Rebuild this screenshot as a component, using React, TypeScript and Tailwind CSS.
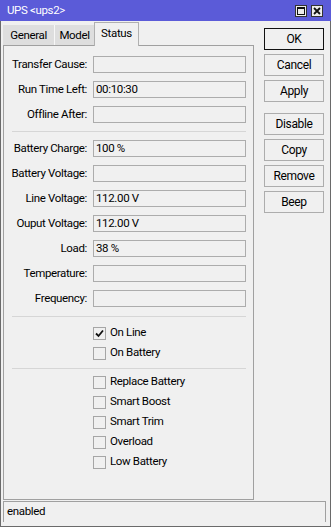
import React from "react";

const fields1: [string, string][] = [
  ["Transfer Cause:", ""],
  ["Run Time Left:", "00:10:30"],
  ["Offline After:", ""],
];
const fields2: [string, string][] = [
  ["Battery Charge:", "100 %"],
  ["Battery Voltage:", ""],
  ["Line Voltage:", "112.00 V"],
  ["Ouput Voltage:", "112.00 V"],
  ["Load:", "38 %"],
  ["Temperature:", ""],
  ["Frequency:", ""],
];
const checks1: [string, boolean][] = [
  ["On Line", true],
  ["On Battery", false],
];
const checks2: [string, boolean][] = [
  ["Replace Battery", false],
  ["Smart Boost", false],
  ["Smart Trim", false],
  ["Overload", false],
  ["Low Battery", false],
];
const buttons1 = ["OK", "Cancel", "Apply"];
const buttons2 = ["Disable", "Copy", "Remove", "Beep"];

function Field({ label, value }: { label: string; value: string }) {
  return (
    <div className="flex h-[25px] items-center">
      <div className="w-[83px] text-right whitespace-nowrap">{label}</div>
      <div className="ml-[6px] flex h-[17px] w-[153px] items-center border border-[#acacac] bg-[#f0f0f0] pl-[2px] whitespace-nowrap">
        {value}
      </div>
    </div>
  );
}

function Check({ label, checked }: { label: string; checked: boolean }) {
  return (
    <div className="flex h-[20px] items-center pl-[89px]">
      <div className="flex h-[13px] w-[13px] items-center justify-center border border-[#a6a6a6] bg-[#f0f0f0]">
        {checked && (
          <svg width="9" height="9" viewBox="0 0 9 9">
            <path d="M1 4.5 L3.5 7 L8 1.5" fill="none" stroke="#111" strokeWidth="1.8" />
          </svg>
        )}
      </div>
      <div className="ml-[4px] whitespace-nowrap">{label}</div>
    </div>
  );
}

function Sep({ cls }: { cls: string }) {
  return <div className={"ml-[8px] h-px w-[234px] bg-[#d6d6d6] " + cls} />;
}

function Btn({ label, def }: { label: string; def?: boolean }) {
  return (
    <div
      className={
        "flex h-[22px] w-[60px] items-center justify-center bg-[#f0f0f0] text-[12px] " +
        (def ? "border border-[#111]" : "border border-[#adadad]")
      }
    >
      {label}
    </div>
  );
}

export default function App() {
  return (
    <div className="flex h-[527px] w-[331px] flex-col overflow-hidden bg-[#f0f0f0] font-['Roboto',Arial,sans-serif] text-[11.5px] tracking-[-0.35px] text-black">
      <div className="flex h-[21px] shrink-0 items-center bg-[#5b5bd8] pl-[7px] pr-[8px] text-white">
        <div className="flex-1 whitespace-nowrap">UPS &lt;ups2&gt;</div>
        <div className="flex h-[12px] w-[12px] items-center justify-center border border-[#333] bg-[#ececec]">
          <div className="h-[8px] w-[8px] border border-t-2 border-[#111]" />
        </div>
        <div className="ml-[4px] flex h-[12px] w-[12px] items-center justify-center border border-[#333] bg-[#ececec]">
          <svg width="8" height="8" viewBox="0 0 8 8">
            <path d="M1 1 L7 7 M7 1 L1 7" stroke="#111" strokeWidth="1.8" />
          </svg>
        </div>
      </div>
      <div className="flex flex-1 flex-col border-x border-b border-[#6a6a6a]">
        <div className="flex h-[479px] shrink-0">
          <div className="ml-[2px] flex w-[251px] flex-col">
            <div className="flex h-[24px] shrink-0 items-end">
              <div className="flex h-[20px] w-[52px] items-center justify-center border-r border-[#f7f7f7] bg-[#dedede] pt-[2px]">
                General
              </div>
              <div className="flex h-[20px] w-[39px] items-center justify-center bg-[#dedede] pt-[2px]">Model</div>
              <div className="relative z-10 -mb-px flex h-[24px] w-[45px] items-center justify-center border-x border-t border-[#b0b0b0] bg-[#f0f0f0] pb-[2px]">
                Status
              </div>
            </div>
            <div className="flex flex-1 flex-col border border-[#a0a0a0] pt-[6px]">
              {fields1.map(([l, v]) => (
                <Field key={l} label={l} value={v} />
              ))}
              <Sep cls="mt-[4px] mb-[4px]" />
              {fields2.map(([l, v]) => (
                <Field key={l} label={l} value={v} />
              ))}
              <Sep cls="mt-[5px] mb-[6px]" />
              {checks1.map(([l, c]) => (
                <Check key={l} label={l} checked={c} />
              ))}
              <Sep cls="mt-[5px] mb-[3px]" />
              {checks2.map(([l, c]) => (
                <Check key={l} label={l} checked={c} />
              ))}
            </div>
          </div>
          <div className="ml-[10px] mt-[7px] flex flex-col">
            <div className="flex flex-col gap-[4px]">
              {buttons1.map((b) => (
                <Btn key={b} label={b} def={b === "OK"} />
              ))}
            </div>
            <div className="mt-[11px] flex flex-col gap-[4px]">
              {buttons2.map((b) => (
                <Btn key={b} label={b} />
              ))}
            </div>
          </div>
        </div>
        <div className="mt-px ml-[2px] mr-[4px] flex h-[21px] shrink-0 items-center border-x border-t border-[#a0a0a0] pl-[3px]">
          enabled
        </div>
      </div>
    </div>
  );
}
